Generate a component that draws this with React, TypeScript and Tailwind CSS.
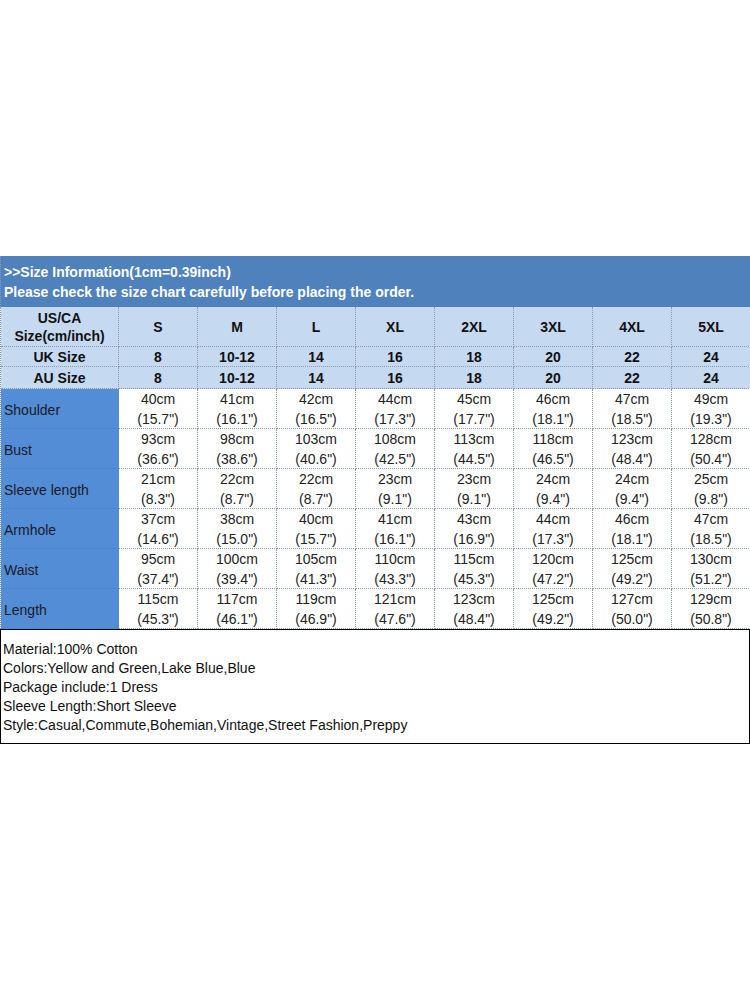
import React from "react";

const sizes = ["S", "M", "L", "XL", "2XL", "3XL", "4XL", "5XL"];
const uk = ["8", "10-12", "14", "16", "18", "20", "22", "24"];

const rows: { label: string; cm: number[]; inch: string[] }[] = [
    { label: "Shoulder", cm: [40, 41, 42, 44, 45, 46, 47, 49], inch: ["15.7", "16.1", "16.5", "17.3", "17.7", "18.1", "18.5", "19.3"] },
    { label: "Bust", cm: [93, 98, 103, 108, 113, 118, 123, 128], inch: ["36.6", "38.6", "40.6", "42.5", "44.5", "46.5", "48.4", "50.4"] },
    { label: "Sleeve length", cm: [21, 22, 22, 23, 23, 24, 24, 25], inch: ["8.3", "8.7", "8.7", "9.1", "9.1", "9.4", "9.4", "9.8"] },
    { label: "Armhole", cm: [37, 38, 40, 41, 43, 44, 46, 47], inch: ["14.6", "15.0", "15.7", "16.1", "16.9", "17.3", "18.1", "18.5"] },
    { label: "Waist", cm: [95, 100, 105, 110, 115, 120, 125, 130], inch: ["37.4", "39.4", "41.3", "43.3", "45.3", "47.2", "49.2", "51.2"] },
    { label: "Length", cm: [115, 117, 119, 121, 123, 125, 127, 129], inch: ["45.3", "46.1", "46.9", "47.6", "48.4", "49.2", "50.0", "50.8"] },
];

const info = [
    "Material:100% Cotton",
    "Colors:Yellow and Green,Lake Blue,Blue",
    "Package include:1 Dress",
    "Sleeve Length:Short Sleeve",
    "Style:Casual,Commute,Bohemian,Vintage,Street Fashion,Preppy",
];

const cell = "border-r border-b border-dotted border-[#8a9bb0]";

export default function App() {
    return (
        <div className="w-[750px] h-[1000px] bg-white text-[14px] text-[#111]" style={{ fontFamily: '"Liberation Sans", Arial, sans-serif' }}>
            <div className="h-[256px]" />

            {/* Title */}
            <div className="h-[51px] bg-[#4f81bd] text-white font-bold pl-[3px] pt-[6px] leading-[20px] border-l border-dotted border-[#8a9bb0]">
                <div>&gt;&gt;Size Information(1cm=0.39inch)</div>
                <div>Please check the size chart carefully before placing the order.</div>
            </div>

            {/* Chart */}
            <div className="grid grid-cols-[118px_repeat(8,79px)] border-l border-dotted border-[#8a9bb0]">
                <div className={`${cell} h-[40px] bg-[#c5d9f1] font-bold flex flex-col items-center justify-center leading-[18px]`}>
                    <span>US/CA</span>
                    <span>Size(cm/inch)</span>
                </div>
                {sizes.map((s) => (
                    <div key={s} className={`${cell} h-[40px] bg-[#c5d9f1] font-bold flex items-center justify-center pt-[2px]`}>
                        {s}
                    </div>
                ))}

                {["UK Size", "AU Size"].map((label, r) => (
                    <React.Fragment key={label}>
                        <div className={`${cell} ${r === 0 ? "h-[20px]" : "h-[22px]"} bg-[#c5d9f1] font-bold flex items-center justify-center pt-[1px]`}>
                            {label}
                        </div>
                        {uk.map((v, i) => (
                            <div key={i} className={`${cell} ${r === 0 ? "h-[20px]" : "h-[22px]"} bg-[#c5d9f1] font-bold flex items-center justify-center pt-[1px]`}>
                                {v}
                            </div>
                        ))}
                    </React.Fragment>
                ))}

                {rows.map((row) => (
                    <React.Fragment key={row.label}>
                        <div className="h-[40px] bg-[#538dd5] border-b border-dotted border-[#4a7fc0] flex items-center pl-[3px] pt-[3px] text-[#1a1a2a]">
                            {row.label}
                        </div>
                        {row.cm.map((c, i) => (
                            <div key={i} className={`${cell} h-[40px] flex flex-col items-center justify-center leading-[20px] pt-[1px] text-[#222]`}>
                                <span>{c}cm</span>
                                <span>({row.inch[i]}&quot;)</span>
                            </div>
                        ))}
                    </React.Fragment>
                ))}
            </div>

            {/* Details */}
            <div className="h-[115px] border border-black pl-[2px] pt-[10px] leading-[19px]">
                {info.map((line) => (
                    <div key={line}>{line}</div>
                ))}
            </div>
        </div>
    );
}
